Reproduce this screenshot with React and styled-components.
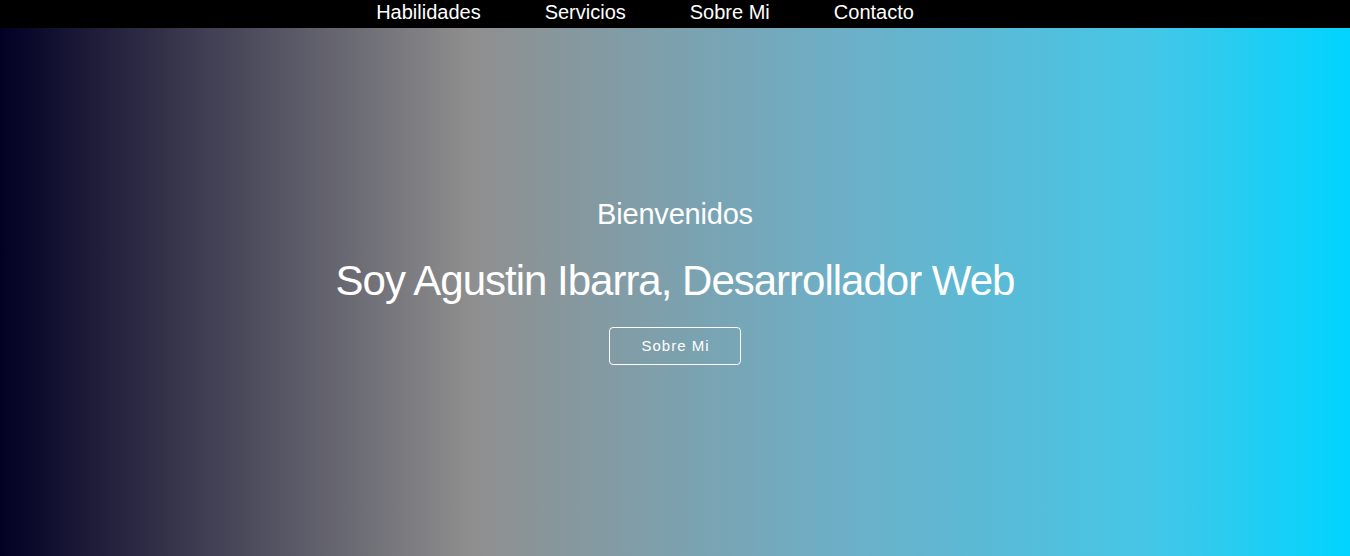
import React from "react";
import styled, { createGlobalStyle } from "styled-components";

const GlobalStyle = createGlobalStyle`
  * {
    box-sizing: border-box;
  }
  body {
    margin: 0;
    font-family: "Liberation Sans", Arial, sans-serif;
    background: #000;
  }
`;

const Nav = styled.nav`
  height: 28px;
  background-color: #000;
`;

const NavList = styled.ul`
  display: flex;
  justify-content: center;
  list-style: none;
  margin: 0;
  padding: 0 0 0 4px;
`;

const NavItem = styled.li`
  margin-right: 64px;
  line-height: 24px;

  a {
    color: #fff;
    text-decoration: none;
    font-size: 20px;
  }
`;

const Hero = styled.header`
  height: 528px;
  display: flex;
  flex-direction: column;
  align-items: center;
  padding-top: 170px;
  color: #fff;
  background: linear-gradient(
    90deg,
    rgb(2, 0, 36) 0%,
    rgb(143, 143, 143) 35%,
    rgb(108, 176, 200) 63%,
    rgb(69, 198, 230) 85%,
    rgb(0, 212, 255) 100%
  );
`;

const Welcome = styled.h2`
  margin: 0;
  font-size: 29px;
  font-weight: normal;
  letter-spacing: -0.2px;
  line-height: 33px;
`;

const Title = styled.h1`
  margin: 26px 0 0;
  font-size: 42px;
  font-weight: normal;
  letter-spacing: -1px;
  line-height: 47px;
`;

const ButtonAbout = styled.a`
  margin-top: 23px;
  padding: 10px 30px 10px 31px;
  color: #fff;
  font-size: 15px;
  letter-spacing: 1px;
  line-height: 16px;
  text-decoration: none;
  border: 1px solid #fff;
  border-radius: 4px;
  cursor: pointer;
`;

const links = ["Habilidades", "Servicios", "Sobre Mi", "Contacto"];

const App = () => {
  return (
    <>
      <GlobalStyle />
      <Nav>
        <NavList>
          {links.map((link) => (
            <NavItem key={link}>
              <a href="#">{link}</a>
            </NavItem>
          ))}
        </NavList>
      </Nav>
      <Hero>
        <Welcome>Bienvenidos</Welcome>
        <Title>Soy Agustin Ibarra, Desarrollador Web</Title>
        <ButtonAbout href="#">Sobre Mi</ButtonAbout>
      </Hero>
    </>
  );
};

export default App;
